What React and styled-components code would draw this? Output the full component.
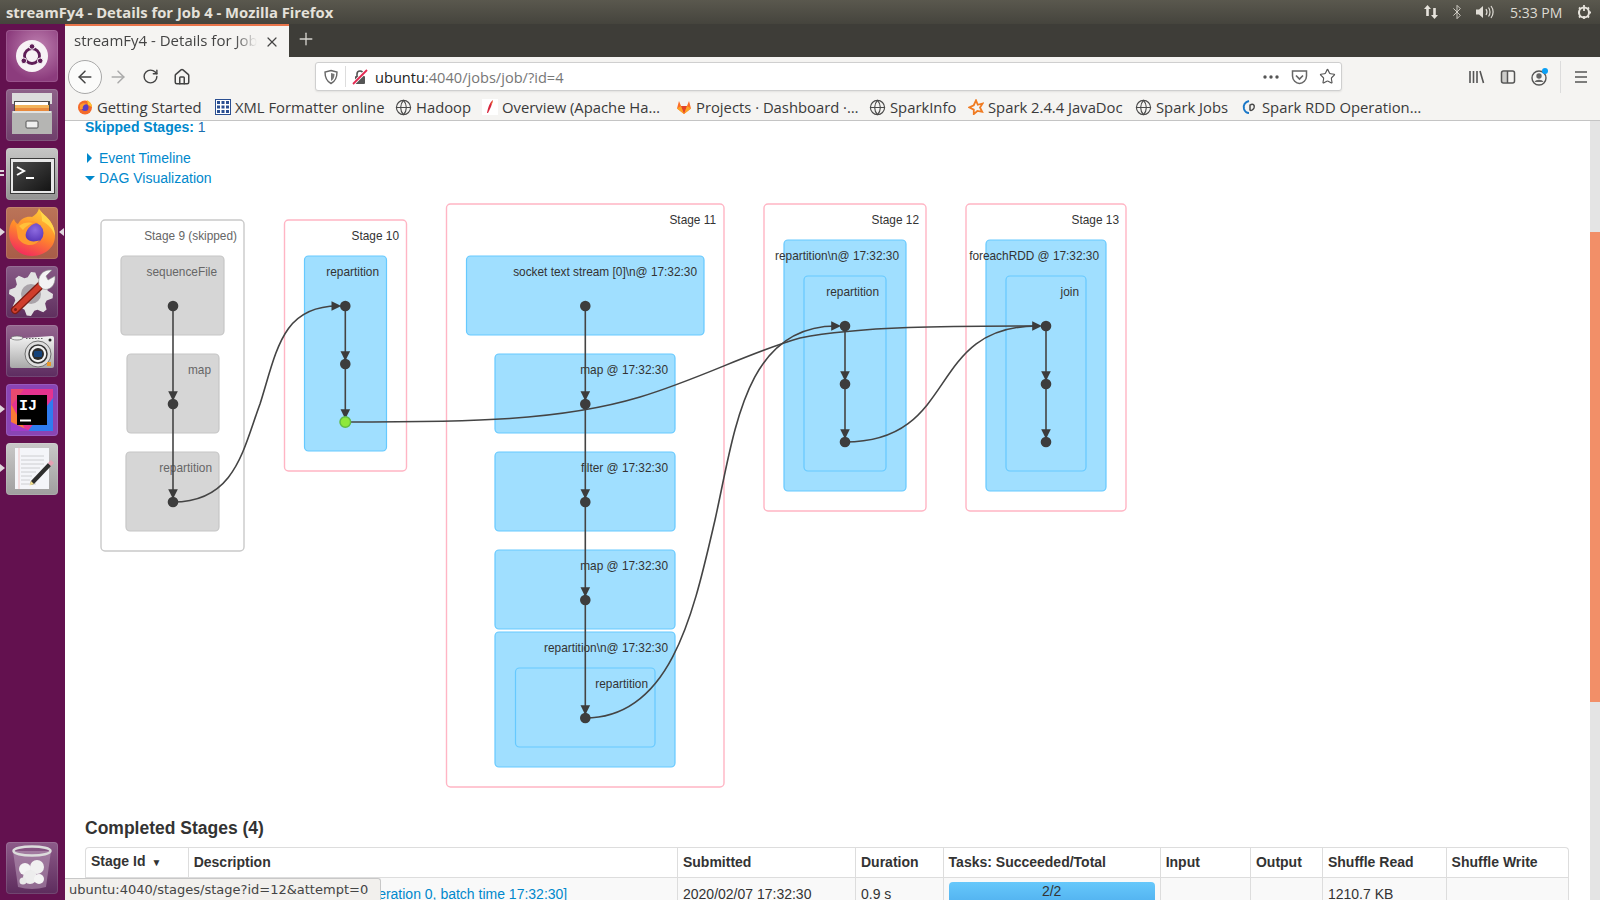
import React from 'react'
import styled, { createGlobalStyle } from 'styled-components'
import { ArrowLeft, ArrowRight, RotateCw, Home, Star, Globe, Bluetooth, X, Plus } from 'lucide-react'

const GlobalStyle = createGlobalStyle`
  html, body { margin: 0; padding: 0; overflow: hidden; background: #fff; }
  * { box-sizing: border-box; }
`

const Screen = styled.div`
  width: 1600px;
  height: 900px;
  display: flex;
  flex-direction: column;
  overflow: hidden;
  font-family: "Liberation Sans", Arial, sans-serif;
`
const TitleBar = styled.div`
  height: 24px;
  flex: none;
  display: flex;
  align-items: center;
  padding-left: 6px;
  background: linear-gradient(#5a584e, #45443d);
  color: #e4e1da;
  font-family: "Open Sans", sans-serif;
  font-size: 14.8px;
  font-weight: 700;
`
const TitleText = styled.span`
  flex: 1;
`
const Tray = styled.div`
  display: flex;
  align-items: center;
  color: #dedbd3;
  height: 24px;
  padding-right: 3px;
`
const TrayIcon = styled.span`
  display: flex;
  justify-content: center;
  width: ${p => p.$w || 28}px;
`
const Clock = styled.span`
  font-family: "Open Sans", sans-serif;
  font-size: 14px;
  font-weight: 400;
  margin: 0 7px 0 11px;
  width: 54px;
  white-space: nowrap;
`
const Desk = styled.div`
  flex: 1;
  min-height: 0;
  display: flex;
`
const Launcher = styled.nav`
  width: 65px;
  flex: none;
  display: flex;
  flex-direction: column;
  gap: 7px;
  padding: 6px 7px 6px 6px;
  background: #63114f;
`
const Tile = styled.div`
  position: relative;
  width: 52px;
  height: 52px;
  border-radius: 4px;
  background: ${p => p.$bg};
  box-shadow: inset 0 0 0 1px rgba(255,255,255,.12);
  margin-top: ${p => (p.$bottom ? 'auto' : '0')};
  svg { display: block; }
`
const Pip = styled.i`
  position: absolute;
  top: 21px;
  left: ${p => (p.$right ? '53px' : '-6px')};
  width: 0;
  height: 0;
  border-top: 4px solid transparent;
  border-bottom: 4px solid transparent;
  ${p => (p.$right ? 'border-right: 5px solid #dfd6dc;' : 'border-left: 5px solid #dfd6dc;')}
`
const PipBars = styled.i`
  position: absolute;
  top: 22px;
  left: -6px;
  width: 4px;
  height: 6px;
  border-top: 2px solid #dfd6dc;
  border-bottom: 2px solid #dfd6dc;
`
const WindowArea = styled.div`
  flex: 1;
  min-width: 0;
  position: relative;
  display: flex;
  flex-direction: column;
`
const TabStrip = styled.div`
  height: 33px;
  flex: none;
  display: flex;
  background: #3e3d38;
`
const Tab = styled.div`
  width: 224px;
  display: flex;
  align-items: center;
  padding: 0 0 3px 9px;
  background: #f5f4f2;
  border-top: 2px solid #e9744a;
  color: #444;
  font-family: "Open Sans", sans-serif;
  font-size: 15px;
`
const TabLabel = styled.span`
  width: 183px;
  overflow: hidden;
  white-space: nowrap;
  -webkit-mask-image: linear-gradient(90deg, #000 88%, transparent);
  mask-image: linear-gradient(90deg, #000 88%, transparent);
`
const TabClose = styled.span`
  display: flex;
  margin-left: 7px;
  margin-top: 3px;
  color: #444;
`
const NewTab = styled.span`
  display: flex;
  align-items: center;
  margin-left: 7px;
  padding-bottom: 3px;
  color: #d5d3ce;
`
const Toolbar = styled.div`
  height: 38px;
  flex: none;
  display: flex;
  align-items: center;
  padding: 1px 0 0 3px;
  background: #f5f4f2;
`
const BackButton = styled.span`
  width: 34px;
  height: 34px;
  border-radius: 50%;
  border: 1px solid #a8a8a8;
  background: #fbfbfa;
  display: flex;
  align-items: center;
  justify-content: center;
  color: #444;
`
const ToolButton = styled.span`
  width: 32px;
  height: 32px;
  flex: none;
  display: flex;
  align-items: center;
  justify-content: center;
  color: ${p => (p.$off ? '#aaa' : '#444')};
`
const UrlBar = styled.div`
  width: 1027px;
  height: 29px;
  margin: 0 118px 0 117px;
  flex: none;
  display: flex;
  align-items: center;
  padding: 0 0 0 7px;
  background: #fff;
  border: 1px solid #cfcfcf;
  border-radius: 3px;
  box-shadow: 0 1px 2px rgba(0,0,0,.08);
  font-family: "Open Sans", sans-serif;
  font-size: 14.6px;
  color: #777;
`
const UrlDivider = styled.span`
  width: 1px;
  height: 21px;
  margin: 0 6px 0 6px;
  background: #ddd;
`
const UrlHost = styled.span`
  margin-left: 7px;
  color: #222;
`
const UrlTools = styled.span`
  margin-left: auto;
  display: flex;
  align-items: center;
  color: #555;
`
const UrlTool = styled.span`
  width: 28px;
  display: flex;
  justify-content: center;
`
const ToolSeparator = styled.span`
  width: 1px;
  height: 32px;
  margin-left: 4px;
  margin-right: 4px;
  background: #dcdcdc;
`
const Bookmarks = styled.div`
  height: 26px;
  flex: none;
  display: flex;
  align-items: center;
  gap: 12px;
  padding: 0 0 1px 12px;
  background: #f5f4f2;
  border-bottom: 1px solid #c4c4c4;
  font-family: "Open Sans", sans-serif;
  font-size: 14.8px;
  color: #333;
`
const Bookmark = styled.span`
  display: flex;
  align-items: center;
  gap: 4px;
  white-space: nowrap;
  color: #3a3a3a;
  svg { flex: none; }
`
const BookmarkLabel = styled.span`
  display: inline-block;
  width: ${p => p.$w}px;
`
const PageArea = styled.div`
  flex: 1;
  min-height: 0;
  display: flex;
`
const Page = styled.main`
  flex: 1;
  min-width: 0;
  overflow: hidden;
  padding-left: 20px;
  font-size: 14px;
  line-height: 20px;
  color: #333;
  background: #fff;
`
const Skipped = styled.div`
  margin-top: -4px;
  margin-bottom: 11px;
  height: 20px;
  color: #1c6fb0;
`
const SkippedLink = styled.strong`
  color: #0088cc;
`
const Toggle = styled.div`
  display: flex;
  align-items: center;
  height: 20px;
  color: #0088cc;
`
const ToggleArrow = styled.i`
  width: 0;
  height: 0;
  margin-right: ${p => (p.$open ? '4px' : '7px')};
  margin-left: ${p => (p.$open ? '0' : '2px')};
  ${p => (p.$open
    ? 'border-left: 5px solid transparent; border-right: 5px solid transparent; border-top: 5px solid #0088cc;'
    : 'border-top: 5px solid transparent; border-bottom: 5px solid transparent; border-left: 5px solid #0088cc;')}
`
const DagSvg = styled.svg`
  display: block;
  margin-top: 2px;
`
const ClusterRect = styled.rect`
  stroke-width: ${p => (p.$kind === 'stage' || p.$kind === 'skippedStage' ? 1.4 : 1.2)};
  fill: ${p => ({ stage: '#fff', skippedStage: '#fff', rdd: '#a0dfff', skipped: '#d6d6d6' }[p.$kind])};
  stroke: ${p => ({ stage: '#ffb5c4', skippedStage: '#c9c9c9', rdd: '#66c9ff', skipped: '#c6c6c6' }[p.$kind])};
`
const ClusterLabel = styled.text`
  font-family: "Liberation Sans", Arial, sans-serif;
  font-size: 11.85px;
  text-anchor: end;
  fill: ${p => (p.$muted ? '#666' : '#333')};
`
const Edge = styled.path`
  fill: none;
  stroke: #444;
  stroke-width: 1.6;
`
const ArrowHead = styled.polygon`
  fill: #3c3c3c;
`
const Dot = styled.circle`
  fill: ${p => (p.$cached ? '#8ee83c' : '#3d3d3d')};
  stroke: ${p => (p.$cached ? '#62bb46' : 'none')};
  stroke-width: 1.5;
`
const Heading = styled.h4`
  margin: 0;
  height: 47px;
  padding-top: 18px;
  font-size: 17.5px;
  line-height: 20px;
  font-weight: 700;
  color: #333;
`
const Table = styled.table`
  width: 1484px;
  table-layout: fixed;
  border-collapse: separate;
  border-spacing: 0;
`
const Th = styled.th`
  height: 28px;
  padding: 3px 5px 4px;
  text-align: left;
  font-weight: 700;
  white-space: nowrap;
  border-top: 1px solid #ddd;
  border-left: 1px solid #ddd;
  &:first-child { border-top-left-radius: 4px; }
  &:last-child { border-top-right-radius: 4px; border-right: 1px solid #ddd; }
`
const SortMark = styled.span`
  font-size: 10px;
  margin-left: 6px;
`
const Td = styled.td`
  padding: 3px 5px 5px;
  white-space: nowrap;
  background: #f9f9f9;
  border-top: 1px solid #ddd;
  border-left: 1px solid #ddd;
  &:last-child { border-right: 1px solid #ddd; }
`
const Link = styled.a`
  color: #0088cc;
`
const Progress = styled.div`
  height: 24px;
  margin-top: 1px;
  border-radius: 4px;
  text-align: center;
  line-height: 18px;
  color: #333;
  background: linear-gradient(#66c8fb, #4fafee);
`
const ScrollTrack = styled.div`
  width: 10px;
  flex: none;
  background: #e4e4e4;
`
const ScrollThumb = styled.div`
  height: 470px;
  margin-top: 111px;
  background: #f28f68;
`
const StatusTip = styled.div`
  position: absolute;
  left: 0;
  bottom: 0;
  width: 316px;
  height: 22px;
  display: flex;
  align-items: center;
  padding-left: 4px;
  background: #f2f0ed;
  border: 1px solid #c8c8c8;
  border-left: 0;
  border-bottom: 0;
  border-top-right-radius: 3px;
  font-family: "DejaVu Sans", sans-serif;
  font-size: 13px;
  color: #444;
  white-space: nowrap;
`

const clusters = [
  { kind: 'skippedStage', x: 101, y: 220, r: 244, b: 551, label: 'Stage 9 (skipped)', tx: 237, ty: 240, muted: true },
  { kind: 'skipped', x: 121, y: 256, r: 224, b: 335, label: 'sequenceFile', tx: 217, ty: 276, muted: true },
  { kind: 'skipped', x: 127, y: 354, r: 219, b: 433, label: 'map', tx: 211, ty: 374, muted: true },
  { kind: 'skipped', x: 126, y: 452, r: 219, b: 531, label: 'repartition', tx: 212, ty: 472, muted: true },
  { kind: 'stage', x: 284.5, y: 220, r: 406.5, b: 471, label: 'Stage 10', tx: 399, ty: 240 },
  { kind: 'rdd', x: 304.5, y: 256, r: 386.5, b: 451, label: 'repartition', tx: 379, ty: 276 },
  { kind: 'stage', x: 446.5, y: 204, r: 724, b: 787, label: 'Stage 11', tx: 716, ty: 224 },
  { kind: 'rdd', x: 466.5, y: 256, r: 704, b: 335, label: 'socket text stream [0]\\n@ 17:32:30', tx: 697, ty: 276 },
  { kind: 'rdd', x: 495, y: 354, r: 675, b: 433, label: 'map @ 17:32:30', tx: 668, ty: 374 },
  { kind: 'rdd', x: 495, y: 452, r: 675, b: 531, label: 'filter @ 17:32:30', tx: 668, ty: 472 },
  { kind: 'rdd', x: 495, y: 550, r: 675, b: 629, label: 'map @ 17:32:30', tx: 668, ty: 570 },
  { kind: 'rdd', x: 495, y: 632, r: 675, b: 767, label: 'repartition\\n@ 17:32:30', tx: 668, ty: 652 },
  { kind: 'rdd', x: 515.5, y: 668, r: 655, b: 747, label: 'repartition', tx: 648, ty: 688 },
  { kind: 'stage', x: 764, y: 204, r: 926, b: 511, label: 'Stage 12', tx: 919, ty: 224 },
  { kind: 'rdd', x: 784, y: 240, r: 906, b: 491, label: 'repartition\\n@ 17:32:30', tx: 899, ty: 260 },
  { kind: 'rdd', x: 804, y: 276, r: 886, b: 471, label: 'repartition', tx: 879, ty: 296 },
  { kind: 'stage', x: 966, y: 204, r: 1126, b: 511, label: 'Stage 13', tx: 1119, ty: 224 },
  { kind: 'rdd', x: 986, y: 240, r: 1106, b: 491, label: 'foreachRDD @ 17:32:30', tx: 1099, ty: 260 },
  { kind: 'rdd', x: 1006, y: 276, r: 1086, b: 471, label: 'join', tx: 1079, ty: 296 },
]

const chains = [
  { x: 173, ys: [306, 404, 502] },
  { x: 345.3, ys: [306, 364, 422] },
  { x: 585.3, ys: [306, 404, 502, 600, 718] },
  { x: 845, ys: [326, 384, 442] },
  { x: 1046, ys: [326, 384, 442] },
]

const curves = [
  'M173,502 C235,502 243,450 260,404 C277,350 282,306 338,306',
  'M345,422 C470,422 560,421 640,397 C700,379 750,352 800,338 C860,326 950,326 1036,326',
  'M585,718 C672,718 694,610 715,520 C735,430 745,326 836,326',
  'M845,442 C960,442 925,326 1037,326',
]

const heads = [[345.3, 306], [845, 326], [1046, 326]]

const columns = [102.7, 489.3, 178, 87.6, 217.1, 90.3, 72, 123.6, 123.4]

// toothed wheel for the settings tile
const gearPath = (cx, cy, outer, inner, teeth) => {
  const pts = []
  for (let i = 0; i < teeth * 4; i++) {
    const a = (i / (teeth * 4)) * Math.PI * 2
    const r = i % 4 < 2 ? outer : inner
    pts.push(`${(cx + r * Math.cos(a)).toFixed(1)},${(cy + r * Math.sin(a)).toFixed(1)}`)
  }
  return `M${pts.join(' L')}Z`
}

const Dag = () => (
  <DagSvg width="1100" height="610" viewBox="85 190 1100 610">
    {clusters.map(c => (
      <g key={c.label + c.x + c.y}>
        <ClusterRect $kind={c.kind} x={c.x} y={c.y} width={c.r - c.x} height={c.b - c.y} rx="4" />
        <ClusterLabel $muted={c.muted} x={c.tx} y={c.ty}>{c.label}</ClusterLabel>
      </g>
    ))}
    {curves.map(d => <Edge key={d} d={d} />)}
    {chains.map(({ x, ys }) => (
      <g key={x}>
        <Edge d={`M${x},${ys[0]} V${ys[ys.length - 1]}`} />
        {ys.slice(1).map(y => (
          <ArrowHead key={y} points={`${x - 4.8},${y - 12.8} ${x + 4.8},${y - 12.8} ${x},${y - 3}`} />
        ))}
        {ys.map(y => <Dot key={y} cx={x} cy={y} r="5.3" $cached={x === 345.3 && y === 422} />)}
      </g>
    ))}
    {heads.map(([x, y]) => (
      <ArrowHead key={x} points={`${x - 13.8},${y - 4.8} ${x - 13.8},${y + 4.8} ${x - 4},${y}`} />
    ))}
  </DagSvg>
)

const UbuntuTile = () => (
  <Tile $bg="radial-gradient(circle at 60% 35%, #c184b3, #8c3c7d 70%)">
    <svg width="52" height="52" viewBox="0 0 52 52">
      <circle cx="26" cy="26" r="16" fill="#f7f2f5" />
      <circle cx="26" cy="26" r="7.500" fill="none" stroke="#5f1d57" strokeWidth="2.800" />
      <circle cx="26" cy="16.500" r="2.800" fill="#5f1d57" stroke="#f7f2f5" />
      <circle cx="17.800" cy="30.800" r="2.800" fill="#5f1d57" stroke="#f7f2f5" />
      <circle cx="34.200" cy="30.800" r="2.800" fill="#5f1d57" stroke="#f7f2f5" />
    </svg>
  </Tile>
)

const FilesTile = () => (
  <Tile $bg="linear-gradient(#8e6289, #6f3f6b)">
    <svg width="52" height="52" viewBox="0 0 52 52">
      <rect x="6" y="4" width="40" height="11" fill="#dcdcdc" />
      <rect x="8" y="12" width="36" height="12" fill="#4a4a4a" />
      <rect x="9" y="13" width="33" height="3" fill="#fff" />
      <rect x="9" y="16" width="34" height="3" fill="#f2b35a" />
      <rect x="9" y="19" width="34" height="3" fill="#e98a3c" />
      <path d="M6 22 H46 V45 H6Z" fill="#b5b5b3" />
      <rect x="7" y="22" width="38" height="2" fill="#e2e2e0" />
      <rect x="20" y="32" width="12" height="7" rx="1" fill="#efefef" stroke="#555" />
    </svg>
  </Tile>
)

const TerminalTile = () => (
  <Tile $bg="linear-gradient(#c6c6c5, #939392)">
    <svg width="52" height="52" viewBox="0 0 52 52">
      <defs>
        <linearGradient id="term" x1="0" y1="0" x2="1" y2="1">
          <stop offset="0" stopColor="#4a4a4a" />
          <stop offset="1" stopColor="#141414" />
        </linearGradient>
      </defs>
      <rect x="4" y="10" width="45" height="36" fill="#3a3a3a" />
      <rect x="5" y="11" width="43" height="34" fill="#e8e8e8" />
      <rect x="7" y="14" width="38" height="29" fill="url(#term)" />
      <path d="M11 19 L18 23 L11 27" fill="none" stroke="#fff" strokeWidth="2" />
      <path d="M20 30 H28" stroke="#fff" strokeWidth="2" />
    </svg>
    <PipBars />
  </Tile>
)

const FirefoxTile = () => (
  <Tile $bg="linear-gradient(#bb7458, #a85c48)">
    <svg width="52" height="52" viewBox="0 0 52 52">
      <defs>
        <linearGradient id="fx" x1="0.7" y1="0" x2="0.3" y2="1">
          <stop offset="0" stopColor="#ffcf3a" />
          <stop offset="0.5" stopColor="#ff8a2a" />
          <stop offset="1" stopColor="#f2285f" />
        </linearGradient>
        <radialGradient id="fxGlobe" cx="0.6" cy="0.35" r="0.7">
          <stop offset="0" stopColor="#8d6be0" />
          <stop offset="1" stopColor="#4f2bb0" />
        </radialGradient>
      </defs>
      <path d="M33 1 C35 8 49 12 49 29 C49 41 38 49 26 49 C13 49 3 39 3 26 C3 20 5 15 8 12 C9 15 10 16 12 17 C15 11 21 9 26 10 C29 8 32 6 33 1Z" fill="url(#fx)" />
      <path d="M33 1 C35 8 49 12 49 29 C47 22 42 17 36 14 C36 9 35 5 33 1Z" fill="#ffd64a" />
      <circle cx="27" cy="26" r="10.500" fill="url(#fxGlobe)" />
      <path d="M10 18 C16 14 27 13 32 16 C26 16 21 22 20 26 C18 32 25 37 34 33 C29 40 17 40 12 31 Z" fill="#ff9a2e" />
      <path d="M13 19 C17 15 24 15 27 16 C22 18 19 20 17 23Z" fill="#ffc13a" />
    </svg>
    <Pip />
    <Pip $right />
  </Tile>
)

const SettingsTile = () => (
  <Tile $bg="linear-gradient(#875a86, #5f2f5e)">
    <svg width="52" height="52" viewBox="0 0 52 52">
      <path d={gearPath(25, 28, 22, 17, 8)} fill="#e2e2e2" />
      <circle cx="25" cy="28" r="10" fill="#a9a3a9" />
      <path d="M9 44 L36 18" stroke="#7d1d14" strokeWidth="8" strokeLinecap="round" />
      <path d="M9 44 L36 18" stroke="#cf3d2c" strokeWidth="5.500" strokeLinecap="round" />
      <circle cx="9.500" cy="43.500" r="1.500" fill="#7d1d14" />
      <path d="M33 19 C31 10 37 3 46 4 L40 10 L42 14 L49 10 C50 20 43 25 37 23Z" fill="#f3f3f3" stroke="#8a8a8a" strokeWidth=".6" />
    </svg>
  </Tile>
)

const CameraTile = () => (
  <Tile $bg="linear-gradient(#94668f, #5d2c60)">
    <svg width="52" height="52" viewBox="0 0 52 52">
      <defs>
        <linearGradient id="cam" x1="0" y1="0" x2="0" y2="1">
          <stop offset="0" stopColor="#f2f2f2" />
          <stop offset="0.5" stopColor="#cfcfcf" />
          <stop offset="1" stopColor="#a8a8a8" />
        </linearGradient>
      </defs>
      <path d="M4 14 L46 11 Q48 11 48 13 V41 Q48 43 46 43 H6 Q4 43 4 41Z" fill="url(#cam)" />
      <ellipse cx="11" cy="13" rx="6" ry="2" fill="#eee" stroke="#666" strokeWidth=".7" />
      <path d="M20 13.500 H38" stroke="#666" strokeDasharray="1.500 1.500" />
      <circle cx="32" cy="29" r="13" fill="#dedede" stroke="#707070" />
      <circle cx="32" cy="29" r="9" fill="#f2f2f2" stroke="#333" strokeWidth="1.500" />
      <circle cx="32" cy="29" r="6" fill="#2b2b2b" />
      <rect x="28" y="26" width="8" height="6" rx="1" fill="#14427a" />
      <circle cx="44" cy="15" r="1.500" fill="#222" />
      <rect x="41" y="37" width="4" height="4" fill="#e99a2c" />
    </svg>
  </Tile>
)

const IdeaTile = () => (
  <Tile $bg="#8a44b4">
    <svg width="52" height="52" viewBox="0 0 52 52">
      <rect x="5" y="5" width="42" height="42" fill="#e4338f" />
      <path d="M5 20 L20 47 H5Z" fill="#f97a35" />
      <path d="M5 5 H18 L5 22Z" fill="#e84a6f" />
      <path d="M47 14 V47 H22Z" fill="#2f7cf0" />
      <path d="M5 47 L5 38 L24 47Z" fill="#a03cc8" />
      <rect x="11" y="11" width="30" height="30" fill="#000" />
      <text x="13" y="26" fontFamily="Liberation Mono, monospace" fontWeight="700" fontSize="15" fill="#fff">IJ</text>
      <rect x="14" y="35.500" width="11" height="2" fill="#fff" />
    </svg>
    <Pip />
  </Tile>
)

const EditorTile = () => (
  <Tile $bg="linear-gradient(#c9c8c8, #a09f9f)">
    <svg width="52" height="52" viewBox="0 0 52 52">
      <rect x="9" y="5" width="34" height="41" fill="#f4f5f9" />
      <path d="M13 5V46" stroke="#f0b8b8" strokeWidth=".8" />
      <path d="M15 13H38M15 17H38M15 21H38M15 25H34M15 29H30M15 33H26M15 37H24M15 41H30" stroke="#c4c4c8" strokeWidth=".8" />
      <path d="M25 38 L42 20 L45 23 L28 41 L24 42Z" fill="#2e2e2e" />
      <path d="M42 20 L45 17 L48 20 L45 23Z" fill="#e6a0b4" />
      <path d="M25 38 L28 41 L23.500 42.500Z" fill="#f2e090" />
    </svg>
    <Pip />
  </Tile>
)

const TrashTile = () => (
  <Tile $bottom $bg="linear-gradient(#8d5b89, #5d2c5d)">
    <svg width="52" height="52" viewBox="0 0 52 52">
      <path d="M7 9 L12 45 Q26 49 40 45 L45 9Z" fill="#c0a4c0" fillOpacity=".5" />
      <circle cx="19" cy="27" r="6" fill="#f4f4f4" />
      <circle cx="31" cy="25" r="7" fill="#f0f0f0" />
      <circle cx="24" cy="35" r="7" fill="#ededed" />
      <circle cx="33" cy="37" r="5" fill="#f4f4f4" />
      <circle cx="17" cy="39" r="3.500" fill="#e9e9e9" />
      <ellipse cx="26" cy="9" rx="18.500" ry="4.500" fill="none" stroke="#dcdcdc" strokeWidth="2.500" />
    </svg>
  </Tile>
)

const FirefoxMark = () => (
  <svg width="16" height="16" viewBox="0 0 16 16">
    <circle cx="8" cy="8.500" r="7" fill="#f46b2a" />
    <path d="M10 1 C13 3 15 5 15 8 L11 6Z" fill="#ffc22e" />
    <circle cx="8" cy="8.500" r="3.500" fill="#5a3ec4" />
    <path d="M3 6 C5 4 8 4 10 5 C7 5 5 8 6 10 L3 10Z" fill="#ff9a2e" />
  </svg>
)
const GridMark = () => (
  <svg width="16" height="16" viewBox="0 0 16 16">
    <rect x=".5" y=".5" width="15" height="15" fill="#fff" stroke="#2b4f91" />
    <path d="M2 2h3v3H2zM6.500 2h3v3h-3zM11 2h3v3h-3zM2 6.500h3v3H2zM6.500 6.500h3v3h-3zM11 6.500h3v3h-3zM2 11h3v3H2zM6.500 11h3v3h-3zM11 11h3v3h-3z" fill="#2b4f91" />
  </svg>
)
const FeatherMark = () => (
  <svg width="16" height="16" viewBox="0 0 16 16">
    <rect width="16" height="16" fill="#fff" />
    <path d="M11 1 C8 3 6 8 5 14 L6 14 C8 10 10 6 11 1Z" fill="#d7263d" />
    <path d="M11 1 C10 3 9.500 4 9 5.500 L10 5Z" fill="#f39a2e" />
  </svg>
)
const GitlabMark = () => (
  <svg width="16" height="16" viewBox="0 0 16 16">
    <path d="M8 15 L1 9.500 L3 2 L5 7 H11 L13 2 L15 9.500Z" fill="#fc6d26" />
    <path d="M8 15 L5 7 H11Z" fill="#e24329" />
    <path d="M8 15 L1 9.500 L5 7Z M8 15 L15 9.500 L11 7Z" fill="#fca326" />
  </svg>
)
const SparkMark = () => (
  <svg width="16" height="16" viewBox="0 0 18 18">
    <path d="M9 1.500 L11 6.500 L16.500 5 L13.500 9.500 L16 14.500 L10.500 13.500 L6.500 17 L6.500 12 L1.500 9.500 L6.500 7Z" fill="none" stroke="#f07b22" strokeWidth="2" />
  </svg>
)
const SwirlMark = () => (
  <svg width="16" height="16" viewBox="0 0 16 16">
    <path d="M7 2 C3 3 1 6 2 10 C3 13 5 14 7 14" fill="none" stroke="#1b78c8" strokeWidth="2" />
    <path d="M8 6 C11 4 13 6 12 9 C11 11 9 12 8 11Z" fill="none" stroke="#4a4a4a" strokeWidth="1.5" />
  </svg>
)
const ShieldIcon = () => (
  <svg width="16" height="16" viewBox="0 0 16 16">
    <path d="M8 1.500 L14 3 C14 9 12 12.500 8 14.500 C4 12.500 2 9 2 3Z" fill="none" stroke="#666" strokeWidth="1.4" />
    <path d="M8 4 L11.500 5 C11.500 8.500 10.500 10.500 8 12Z" fill="#777" />
  </svg>
)
const BrokenLock = () => (
  <svg width="16" height="16" viewBox="0 0 16 16">
    <rect x="3" y="7" width="10" height="8" rx="1" fill="#555" />
    <path d="M5 7 V5 a3 3 0 0 1 6 0 V7" fill="none" stroke="#555" strokeWidth="1.6" />
    <path d="M1 15 L15 1" stroke="#fff" strokeWidth="3.5" />
    <path d="M1 15 L15 1" stroke="#e22850" strokeWidth="1.8" />
  </svg>
)
const DotsIcon = () => (
  <svg width="18" height="6" viewBox="0 0 18 6" fill="#555">
    <circle cx="3" cy="3" r="1.700" /><circle cx="9" cy="3" r="1.700" /><circle cx="15" cy="3" r="1.700" />
  </svg>
)
const PocketIcon = () => (
  <svg width="17" height="16" viewBox="0 0 17 16">
    <path d="M1.500 2 H15.500 V7 C15.500 11 12 14.500 8.500 14.500 C5 14.500 1.500 11 1.500 7Z" fill="none" stroke="#666" strokeWidth="1.5" />
    <path d="M5 6.500 L8.500 10 L12 6.500" fill="none" stroke="#666" strokeWidth="1.7" />
  </svg>
)
const LibraryIcon = () => (
  <svg width="17" height="16" viewBox="0 0 17 16">
    <path d="M2 2V14M5.500 2V14M9 2V14M12 2L15.500 14" stroke="#555" strokeWidth="1.6" fill="none" />
  </svg>
)
const SidebarIcon = () => (
  <svg width="16" height="16" viewBox="0 0 16 16">
    <rect x="1.500" y="2" width="13" height="12" rx="2" fill="none" stroke="#555" strokeWidth="1.500" />
    <rect x="2" y="3" width="5" height="10" fill="#555" fillOpacity=".25" />
    <path d="M7.500 2V14" stroke="#555" strokeWidth="1.500" />
  </svg>
)
const AccountIcon = () => (
  <svg width="20" height="20" viewBox="0 0 20 20">
    <circle cx="9" cy="11" r="7" fill="none" stroke="#555" strokeWidth="1.400" />
    <circle cx="9" cy="9" r="2.700" fill="#666" />
    <path d="M4.500 15 C6 12 12 12 13.500 15" fill="#666" />
    <circle cx="15" cy="4" r="3" fill="#0a9ff5" />
  </svg>
)
const MenuIcon = () => (
  <svg width="14" height="14" viewBox="0 0 14 14">
    <path d="M1 2H13M1 7H13M1 12H13" stroke="#555" strokeWidth="1.600" />
  </svg>
)
const NetIcon = () => (
  <svg width="16" height="16" viewBox="0 0 16 16" fill="#e6e3dc">
    <path d="M4.500 1 L8 5 H5.800 V12 H3.200 V5 H1Z" />
    <path d="M11.500 15 L15 11 H12.800 V4 H10.200 V11 H8Z" />
  </svg>
)
const VolumeIcon = () => (
  <svg width="20" height="16" viewBox="0 0 20 16">
    <path d="M1 5.500H4L8 2V14L4 10.500H1Z" fill="#e0ddd6" />
    <path d="M11 5C12.300 7 12.300 9 11 11M13.500 3.500C15.500 6 15.500 10 13.500 12.500M16 2C18.800 5.500 18.800 10.500 16 14" fill="none" stroke="#e0ddd6" strokeWidth="1.200" />
  </svg>
)
const GearIcon = () => (
  <svg width="16" height="16" viewBox="0 0 16 16">
    <circle cx="8" cy="8.500" r="5" fill="none" stroke="#e6e3dc" strokeWidth="2" />
    <path d="M8 1V7M8 12V15M2 8.500H4M12 8.500H15M3 3.500L4.500 5M13 3.500L11.500 5M3 13.500L4.500 12M13 13.500L11.500 12" stroke="#e6e3dc" strokeWidth="1.800" />
  </svg>
)

const globe = <Globe size={17} strokeWidth={1.6} color="#4a4a4a" />

const bookmarks = [
  { icon: <FirefoxMark />, label: 'Getting Started', w: 106 },
  { icon: <GridMark />, label: 'XML Formatter online', w: 148 },
  { icon: globe, label: 'Hadoop', w: 54 },
  { icon: <FeatherMark />, label: 'Overview (Apache Ha…', w: 162 },
  { icon: <GitlabMark />, label: 'Projects · Dashboard ·…', w: 161 },
  { icon: globe, label: 'SparkInfo', w: 66 },
  { icon: <SparkMark />, label: 'Spark 2.4.4 JavaDoc', w: 135 },
  { icon: globe, label: 'Spark Jobs', w: 74 },
  { icon: <SwirlMark />, label: 'Spark RDD Operation…', w: 160 },
]

const headers = ['Description', 'Submitted', 'Duration', 'Tasks: Succeeded/Total', 'Input', 'Output', 'Shuffle Read', 'Shuffle Write']

export default function App() {
  return (
    <Screen>
      <GlobalStyle />
      <TitleBar>
        <TitleText>streamFy4 - Details for Job 4 - Mozilla Firefox</TitleText>
        <Tray>
          <TrayIcon $w={24}><NetIcon /></TrayIcon>
          <TrayIcon><Bluetooth size={16} strokeWidth={1.3} /></TrayIcon>
          <TrayIcon><VolumeIcon /></TrayIcon>
          <Clock>5:33 PM</Clock>
          <TrayIcon $w={26}><GearIcon /></TrayIcon>
        </Tray>
      </TitleBar>
      <Desk>
        <Launcher>
          <UbuntuTile />
          <FilesTile />
          <TerminalTile />
          <FirefoxTile />
          <SettingsTile />
          <CameraTile />
          <IdeaTile />
          <EditorTile />
          <TrashTile />
        </Launcher>
        <WindowArea>
          <TabStrip>
            <Tab>
              <TabLabel>streamFy4 - Details for Job 4</TabLabel>
              <TabClose><X size={16} strokeWidth={1.8} /></TabClose>
            </Tab>
            <NewTab><Plus size={20} strokeWidth={1.6} /></NewTab>
          </TabStrip>
          <Toolbar>
            <BackButton><ArrowLeft size={20} strokeWidth={1.8} /></BackButton>
            <ToolButton $off><ArrowRight size={20} strokeWidth={1.8} /></ToolButton>
            <ToolButton><RotateCw size={17} strokeWidth={2} /></ToolButton>
            <ToolButton><Home size={18} strokeWidth={2} /></ToolButton>
            <UrlBar>
              <ShieldIcon />
              <UrlDivider />
              <BrokenLock />
              <UrlHost>ubuntu</UrlHost>:4040/jobs/job/?id=4
              <UrlTools>
                <UrlTool><DotsIcon /></UrlTool>
                <UrlTool><PocketIcon /></UrlTool>
                <UrlTool><Star size={17} strokeWidth={1.6} /></UrlTool>
              </UrlTools>
            </UrlBar>
            <ToolButton><LibraryIcon /></ToolButton>
            <ToolButton><SidebarIcon /></ToolButton>
            <ToolButton><AccountIcon /></ToolButton>
            <ToolSeparator />
            <ToolButton><MenuIcon /></ToolButton>
          </Toolbar>
          <Bookmarks>
            {bookmarks.map(b => (
              <Bookmark key={b.label}>
                {b.icon}
                <BookmarkLabel $w={b.w}>{b.label}</BookmarkLabel>
              </Bookmark>
            ))}
          </Bookmarks>
          <PageArea>
            <Page>
              <Skipped><SkippedLink>Skipped Stages:</SkippedLink> 1</Skipped>
              <Toggle><ToggleArrow />Event Timeline</Toggle>
              <Toggle><ToggleArrow $open />DAG Visualization</Toggle>
              <Dag />
              <Heading>Completed Stages (4)</Heading>
              <Table>
                <colgroup>
                  {columns.map((w, i) => <col key={i} width={w} />)}
                </colgroup>
                <thead>
                  <tr>
                    <Th>Stage Id<SortMark>▼</SortMark></Th>
                    {headers.map(h => <Th key={h}>{h}</Th>)}
                  </tr>
                </thead>
                <tbody>
                  <tr>
                    <Td>12</Td>
                    <Td>Streaming job from <Link>[output operation 0, batch time 17:32:30]</Link></Td>
                    <Td>2020/02/07 17:32:30</Td>
                    <Td>0.9 s</Td>
                    <Td><Progress>2/2</Progress></Td>
                    <Td />
                    <Td />
                    <Td>1210.7 KB</Td>
                    <Td />
                  </tr>
                </tbody>
              </Table>
            </Page>
            <ScrollTrack><ScrollThumb /></ScrollTrack>
          </PageArea>
          <StatusTip>ubuntu:4040/stages/stage?id=12&amp;attempt=0</StatusTip>
        </WindowArea>
      </Desk>
    </Screen>
  )
}
